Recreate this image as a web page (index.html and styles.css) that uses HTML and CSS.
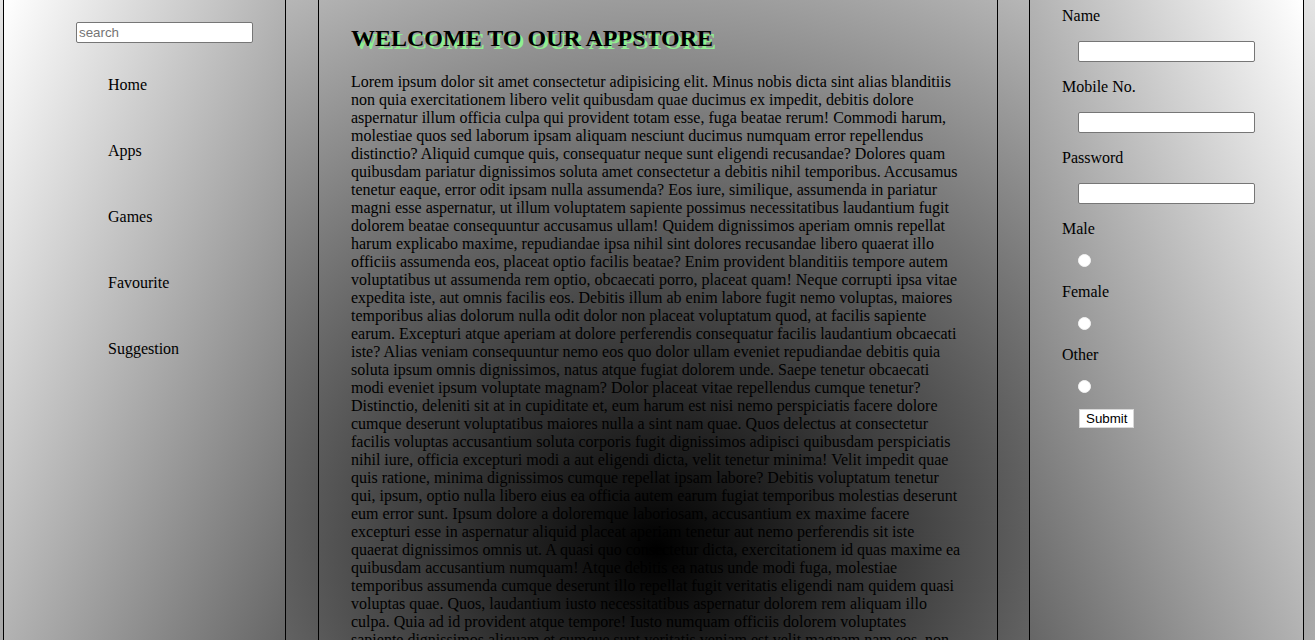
FILE: index.html
```html
<!DOCTYPE html>
<html lang="en">
<head>
<meta charset="utf-8">
<title>Appstore</title>
<link rel="stylesheet" href="styles.css">
</head>
<body>
<div class="page">
  <aside class="sidebar">
    <input class="search" type="text" placeholder="search">
    <nav class="nav">
      <a href="#">Home</a>
      <a href="#">Apps</a>
      <a href="#">Games</a>
      <a href="#">Favourite</a>
      <a href="#">Suggestion</a>
    </nav>
  </aside>
  <main class="content">
    <h2 class="title">WELCOME TO OUR APPSTORE</h2>
    <p class="text">Lorem ipsum dolor sit amet consectetur adipisicing elit. Minus nobis dicta sint alias blanditiis non quia exercitationem libero velit quibusdam quae ducimus ex impedit, debitis dolore aspernatur illum officia culpa qui provident totam esse, fuga beatae rerum! Commodi harum, molestiae quos sed laborum ipsam aliquam nesciunt ducimus numquam error repellendus distinctio? Aliquid cumque quis, consequatur neque sunt eligendi recusandae? Dolores quam quibusdam pariatur dignissimos soluta amet consectetur a debitis nihil temporibus. Accusamus tenetur eaque, error odit ipsam nulla assumenda? Eos iure, similique, assumenda in pariatur magni esse aspernatur, ut illum voluptatem sapiente possimus necessitatibus laudantium fugit dolorem beatae consequuntur accusamus ullam! Quidem dignissimos aperiam omnis repellat harum explicabo maxime, repudiandae ipsa nihil sint dolores recusandae libero quaerat illo officiis assumenda eos, placeat optio facilis beatae? Enim provident blanditiis tempore autem voluptatibus ut assumenda rem optio, obcaecati porro, placeat quam! Neque corrupti ipsa vitae expedita iste, aut omnis facilis eos. Debitis illum ab enim labore fugit nemo voluptas, maiores temporibus alias dolorum nulla odit dolor non placeat voluptatum quod, at facilis sapiente earum. Excepturi atque aperiam at dolore perferendis consequatur facilis laudantium obcaecati iste? Alias veniam consequuntur nemo eos quo dolor ullam eveniet repudiandae debitis quia soluta ipsum omnis dignissimos, natus atque fugiat dolorem unde. Saepe tenetur obcaecati modi eveniet ipsum voluptate magnam? Dolor placeat vitae repellendus cumque tenetur? Distinctio, deleniti sit at in cupiditate et, eum harum est nisi nemo perspiciatis facere dolore cumque deserunt voluptatibus maiores nulla a sint nam quae. Quos delectus at consectetur facilis voluptas accusantium soluta corporis fugit dignissimos adipisci quibusdam perspiciatis nihil iure, officia excepturi modi a aut eligendi dicta, velit tenetur minima! Velit impedit quae quis ratione, minima dignissimos cumque repellat ipsam labore? Debitis voluptatum tenetur qui, ipsum, optio nulla libero eius ea officia autem earum fugiat temporibus molestias deserunt eum error sunt. Ipsum dolore a doloremque laboriosam, accusantium ex maxime facere excepturi esse in aspernatur aliquid placeat aperiam tenetur aut nemo perferendis sit iste quaerat dignissimos omnis ut. A quasi quo consectetur dicta, exercitationem id quas maxime ea quibusdam accusantium numquam! Atque debitis ea natus unde modi fuga, molestiae temporibus assumenda cumque deserunt illo repellat fugit veritatis eligendi nam quidem quasi voluptas quae. Quos, laudantium iusto necessitatibus aspernatur dolorem rem aliquam illo culpa. Quia ad id provident atque tempore! Iusto numquam officiis dolorem voluptates sapiente dignissimos aliquam et cumque sunt veritatis veniam est velit magnam nam eos, non eius quisquam dolorum ipsa reiciendis. Nostrum, quas? Voluptatem, laboriosam ipsum.</p>
  </main>
  <aside class="signup">
    <form class="form">
      <label class="label">Name</label>
      <input class="field" type="text">
      <label class="label">Mobile No.</label>
      <input class="field" type="text">
      <label class="label">Password</label>
      <input class="field" type="password">
      <label class="label">Male</label>
      <input class="radio" type="radio" name="gender">
      <label class="label">Female</label>
      <input class="radio" type="radio" name="gender">
      <label class="label">Other</label>
      <input class="radio" type="radio" name="gender">
      <button class="submit" type="button">Submit</button>
    </form>
  </aside>
</div>
</body>
</html>
```

FILE: styles.css
```css
html {
  background: #fff radial-gradient(1000px 900px at 657px 550px, #000, #fff) no-repeat;
}

body {
  margin: 0;
  font-family: "Liberation Serif", "Times New Roman", serif;
  font-size: 16px;
  line-height: 18px;
  color: #000;
}

.page {
  display: flex;
  align-items: flex-start;
  padding-left: 3px;
}

.sidebar {
  box-sizing: border-box;
  width: 283px;
  height: 640px;
  flex: none;
  border-left: 1px solid #000;
  border-right: 1px solid #000;
  background: linear-gradient(to bottom right, #fff, #666);
  display: flex;
  flex-direction: column;
  padding-top: 22px;
}

.search {
  box-sizing: border-box;
  width: 177px;
  height: 21px;
  margin-left: 72px;
  padding: 1px 2px;
  border: 1px solid #767676;
  border-radius: 2px;
  background: #fff;
  font-family: "Liberation Sans", Arial, sans-serif;
  font-size: 13.33px;
  color: #000;
}

.search::placeholder {
  color: #757575;
}

.nav {
  display: flex;
  flex-direction: column;
  gap: 48px;
  margin-top: 33px;
  padding-left: 104px;
}

.nav a {
  color: #000;
  text-decoration: none;
}

.content {
  box-sizing: border-box;
  width: 680px;
  flex: none;
  margin-left: 32px;
  border-left: 1px solid #000;
  border-right: 1px solid #000;
  padding: 25px 35px 20px 32px;
}

.title {
  margin: 0;
  font-size: 24px;
  line-height: 27px;
  font-weight: bold;
  text-shadow: 3px 3px #90ee90;
}

.text {
  margin: 21px 0 0;
}

.signup {
  box-sizing: border-box;
  width: 275px;
  height: 640px;
  flex: none;
  margin-left: 31px;
  border-left: 1px solid #000;
  border-right: 1px solid #000;
  background: linear-gradient(to bottom left, #fff, #666);
}

.form {
  display: flex;
  flex-direction: column;
  align-items: flex-start;
  gap: 16px;
  padding: 7px 0 0 32px;
}

.field {
  box-sizing: border-box;
  width: 177px;
  height: 21px;
  margin: 0 0 0 16px;
  padding: 1px 2px;
  border: 1px solid #767676;
  border-radius: 2px;
  background: #fff;
}

.radio {
  appearance: none;
  -webkit-appearance: none;
  box-sizing: border-box;
  width: 13px;
  height: 13px;
  margin: 0 0 0 16px;
  border-radius: 50%;
  border: 1px solid #f4f4f4;
  background: #fff;
}

.submit {
  margin: 0 0 0 17px;
  height: 19px;
  padding: 0 6px;
  border: 1px solid #d8d8d8;
  background: #fff;
  font-family: "Liberation Sans", Arial, sans-serif;
  font-size: 13.33px;
  line-height: 15px;
  color: #000;
}
```
